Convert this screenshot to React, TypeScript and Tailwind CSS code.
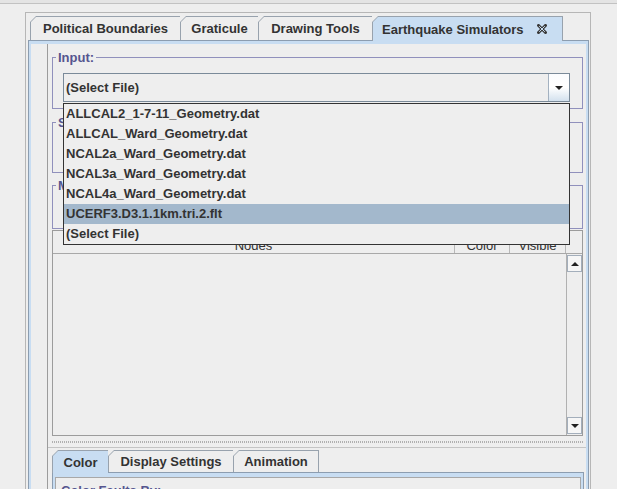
import React from 'react';

const files = [
  'ALLCAL2_1-7-11_Geometry.dat',
  'ALLCAL_Ward_Geometry.dat',
  'NCAL2a_Ward_Geometry.dat',
  'NCAL3a_Ward_Geometry.dat',
  'NCAL4a_Ward_Geometry.dat',
  'UCERF3.D3.1.1km.tri.2.flt',
  '(Select File)',
];

interface TabProps {
  label: string;
  w: string;
  h: string;
  selected?: boolean;
  last?: boolean;
  inner?: string;
  children?: React.ReactNode;
}

// Metal style tab with the bevelled top-left corner
const Tab: React.FC<TabProps> = ({ label, w, h, selected, last, inner, children }) => (
  <div
    className={`${w} ${h} relative shrink-0 bg-[#98a2ad] pl-px pt-px ${last ? 'pr-px' : ''} ${selected ? 'z-10' : ''} [clip-path:polygon(0_6px,6px_0,100%_0,100%_100%,0_100%)]`}
  >
    <div
      className={`h-full flex items-center ${inner ?? 'justify-center'} ${selected ? 'bg-[#c8ddf2]' : 'bg-[#eeeeee]'} [clip-path:polygon(0_5px,5px_0,100%_0,100%_100%,0_100%)]`}
    >
      <span className="leading-[15px]">{label}</span>
      {children}
    </div>
  </div>
);

const CloseIcon = () => (
  <svg width="10" height="10" viewBox="0 0 10 10" className="shrink-0">
    <path d="M1.5 1.5 L8.5 8.5 M8.5 1.5 L1.5 8.5" stroke="#3a3a3a" strokeWidth="3" strokeLinecap="square" />
    <path d="M2.2 2.2 L7.8 7.8 M7.8 2.2 L2.2 7.8" stroke="#c8ddf2" strokeWidth="1" />
  </svg>
);

const Arrow = ({ up }: { up?: boolean }) => (
  <svg width="8" height="4" viewBox="0 0 8 4">
    <polygon points={up ? '0,4 8,4 4,0' : '0,0 8,0 4,4'} fill="#222" />
  </svg>
);

const TitledBox: React.FC<{ title: string; className?: string; children?: React.ReactNode }> = ({ title, className, children }) => (
  <fieldset className={`shrink-0 border border-[#9090bc] ${className ?? ''}`}>
    <legend className="ml-[3px] px-[2px] leading-[15px] text-[#55558f]">{title}</legend>
    {children}
  </fieldset>
);

export default function App() {
  return (
    <div className="w-[617px] h-[489px] overflow-hidden bg-[#eeeeee] flex flex-col font-['Liberation_Sans',Arial,sans-serif] text-[13px] font-bold text-[#333333]">
      <div className="h-[3px] shrink-0 bg-[#e4e4e4]" />
      <div className="h-px shrink-0 bg-[#c2c2c2]" />
      <div className="h-[8px] shrink-0" />

      {/* outer frame */}
      <div className="ml-[25px] w-[566px] flex-1 min-h-0 border-x border-t border-[#b6b6b6] pl-[2px] pr-px pt-[3px] flex flex-col">
        {/* main tabs */}
        <div className="h-[24px] shrink-0 flex items-start pl-[2px]">
          <Tab label="Political Boundaries" w="w-[150px]" h="h-[24px]" />
          <Tab label="Graticule" w="w-[78px]" h="h-[24px]" />
          <Tab label="Drawing Tools" w="w-[114px]" h="h-[24px]" />
          <Tab label="Earthquake Simulators" w="w-[191px]" h="h-[25px]" selected last inner="justify-start pl-[9px] gap-[13px]">
            <CloseIcon />
          </Tab>
        </div>

        {/* tab content */}
        <div className="flex-1 min-h-0 border-x border-t border-[#8c9db0] bg-[#c8ddf2] pt-[3px] px-[2px] flex flex-col">
          <div className="flex-1 min-h-0 bg-[#eeeeee] pl-[16px] flex">
            <div className="flex-1 min-h-0 border-l border-[#9c9c9c] flex flex-col">
              {/* upper split pane */}
              <div className="shrink-0 flex flex-col pl-[4px] pr-[3px]">
                <TitledBox title="Input:" className="mt-[6px]">
                  <div className="pl-[10px] pb-[6px]">
                    <div className="relative mt-[8px] w-[507px]">
                      <div className="h-[29px] flex border border-[#7a8a99] bg-[#eeeeee]">
                        <div className="flex-1 flex items-center pl-[2px]">(Select File)</div>
                        <div className="w-[21px] border-l border-[#a3b1c0] bg-linear-to-b from-[#fbfcfe] via-white to-[#d3e1ee] flex items-center justify-center">
                          <Arrow />
                        </div>
                      </div>

                      {/* open popup list */}
                      <div className="absolute left-0 top-[30px] z-20 w-[507px] h-[142px] border border-[#333333] bg-[#eeeeee] flex flex-col">
                        {files.map((f, i) => (
                          <div
                            key={f}
                            className={`h-[20px] flex items-center pl-[2px] ${i === 5 ? 'bg-[#a3b8cc]' : ''}`}
                          >
                            {f}
                          </div>
                        ))}
                      </div>
                    </div>
                  </div>
                </TitledBox>

                <TitledBox title="Slip Settings:" className="mt-[6px] h-[58px]" />
                <TitledBox title="Mode:" className="mt-[5px] h-[51px]" />

                {/* table */}
                <div className="shrink-0 mt-px h-[206px] border border-[#9c9c9c] flex flex-col">
                  <div className="h-[23px] shrink-0 flex border-b border-[#a8a8a8] font-normal leading-[15px]">
                    <div className="w-[402px] border-r border-[#b8b8b8] flex items-end justify-center">Nodes</div>
                    <div className="w-[55px] border-r border-[#b8b8b8] flex items-end justify-center">Color</div>
                    <div className="w-[56px] border-r border-[#b8b8b8] flex items-end justify-center">Visible</div>
                    <div className="flex-1" />
                  </div>
                  <div className="flex-1 flex">
                    <div className="flex-1" />
                    <div className="w-[16px] border-l border-[#b0b0b0] flex flex-col justify-between py-px">
                      <div className="h-[17px] border border-[#a3aebb] bg-[#f6f6f6] flex items-center justify-center">
                        <Arrow up />
                      </div>
                      <div className="h-[17px] border border-[#a3aebb] bg-[#f6f6f6] flex items-center justify-center">
                        <Arrow />
                      </div>
                    </div>
                  </div>
                </div>
              </div>

              {/* divider */}
              <div className="h-[11px] shrink-0 pt-[5px] pl-[4px] pr-[3px]">
                <div className="h-[2px] border-y border-dotted border-[#b0b0b0]" />
              </div>

              {/* lower split pane */}
              <div className="flex-1 min-h-0 overflow-hidden border-t border-[#c4c4c4] pt-[2px] flex flex-col">
                <div className="h-[22px] shrink-0 flex items-start pl-[4px]">
                  <Tab label="Color" w="w-[56px]" h="h-[23px]" selected />
                  <Tab label="Display Settings" w="w-[125px]" h="h-[22px]" />
                  <Tab label="Animation" w="w-[86px]" h="h-[22px]" last />
                </div>
                <div className="flex-1 shrink-0 ml-[4px] mr-[2px] border-x border-t border-[#8c9db0] bg-[#c8ddf2] pt-[4px] px-[2px] flex flex-col">
                  <div className="flex-1 border-x border-t border-[#a8a8a8] bg-[#eeeeee] pl-[5px] pt-[5px] leading-[15px] text-[#55558f]">
                    Color Faults By:
                  </div>
                </div>
              </div>
            </div>
          </div>
        </div>
      </div>
    </div>
  );
}
